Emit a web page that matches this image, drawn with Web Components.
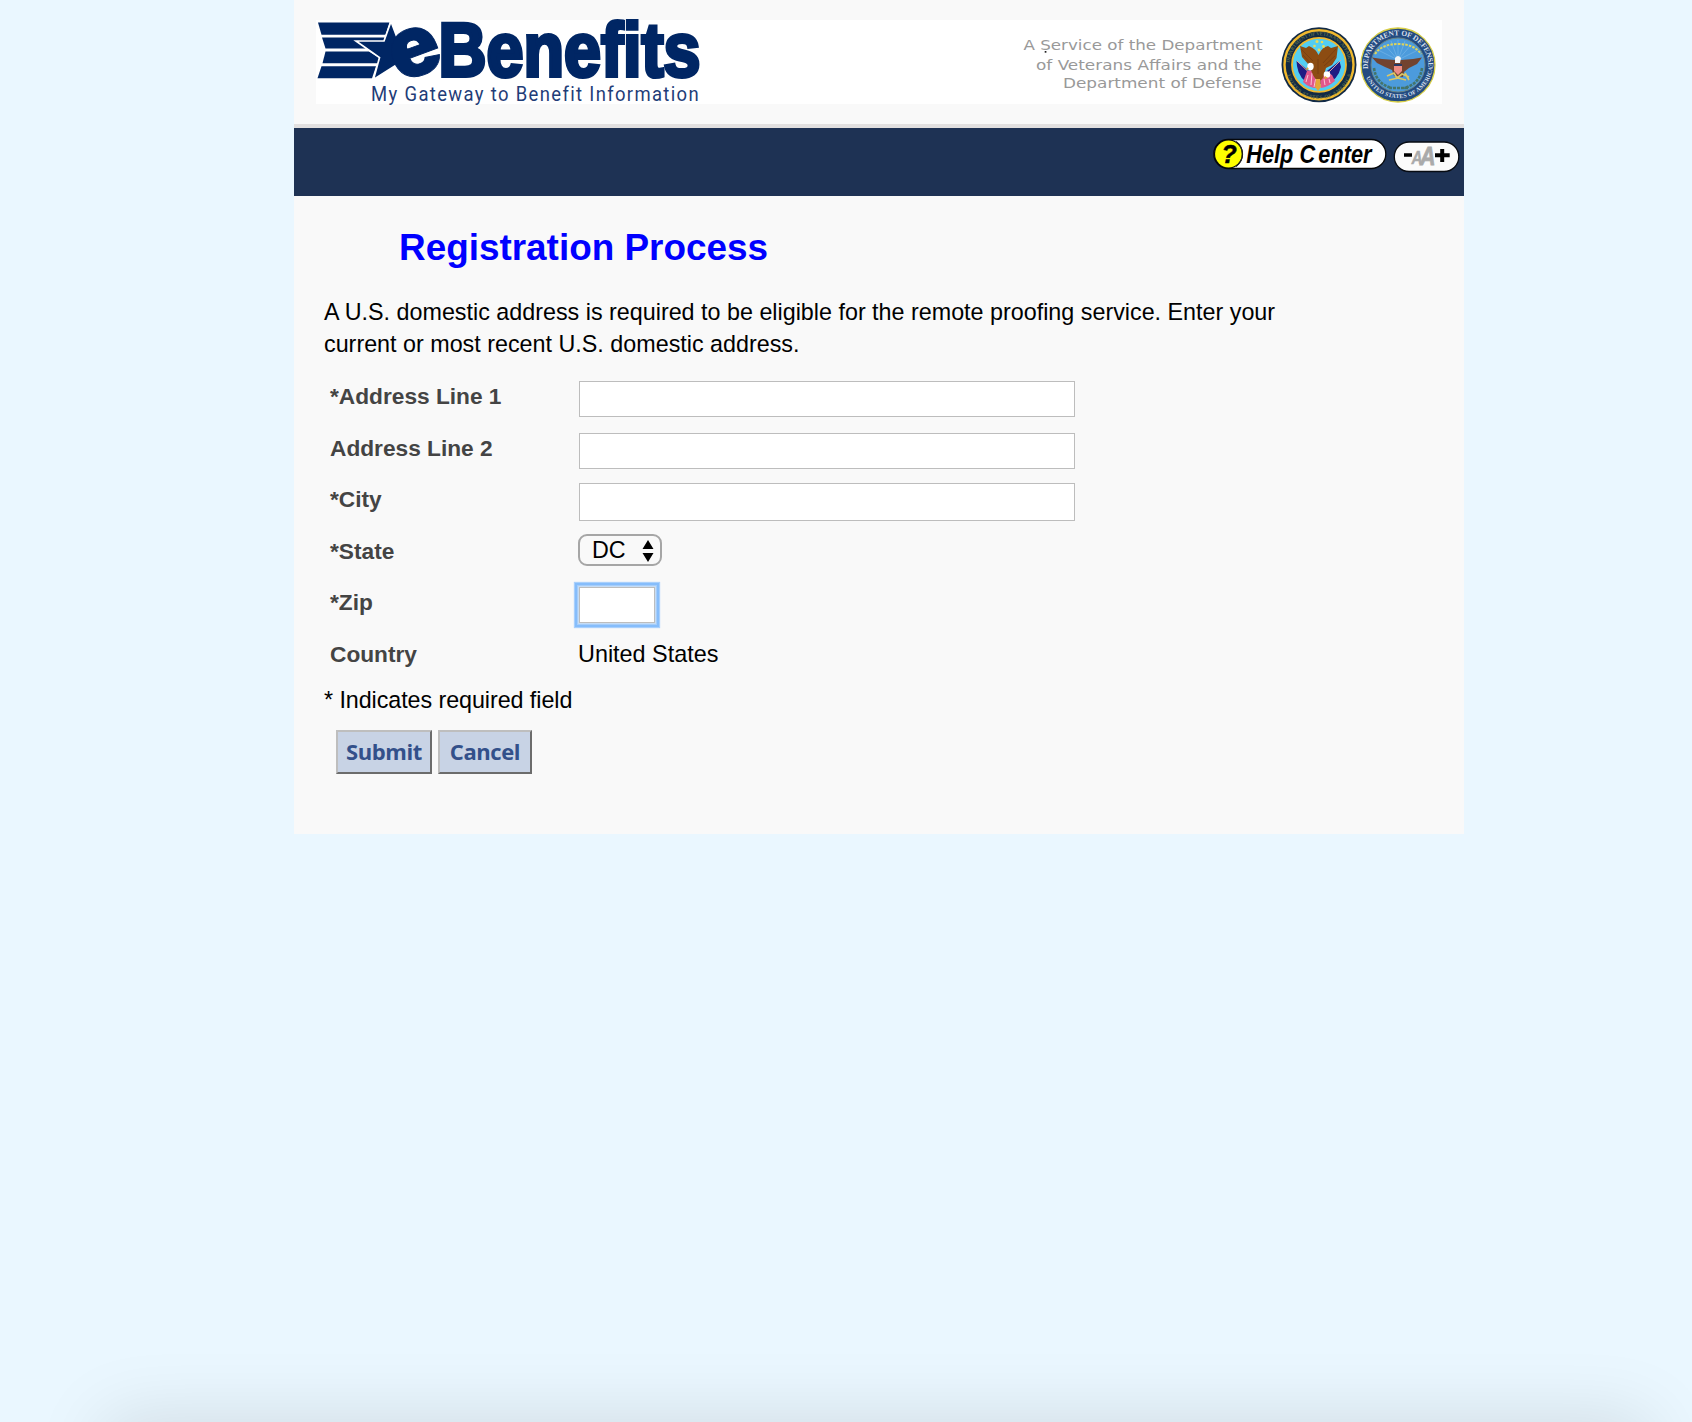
<!DOCTYPE html>
<html lang="en">
<head>
<meta charset="utf-8">
<title>eBenefits - Registration Process</title>
<style>
html,body{margin:0;height:100%}
body{background:#eaf7ff;font-family:"Liberation Sans",Arial,sans-serif;overflow:hidden}
</style>
</head>
<body>
<eb-page>
  <eb-banner slot="header"></eb-banner>
  <eb-nav slot="nav"><eb-help></eb-help><eb-textsize></eb-textsize></eb-nav>
  <eb-form>
    <span slot="title">Registration Process</span>
    <span slot="intro">A U.S. domestic address is required to be eligible for the remote proofing service. Enter your<br>current or most recent U.S. domestic address.</span>
    <eb-row label="*Address Line 1"><eb-input w="496" h="36"></eb-input></eb-row>
    <eb-row label="Address Line 2" style="--top:9.400px"><eb-input w="496" h="36"></eb-input></eb-row>
    <eb-row label="*City" style="--top:7.800px"><eb-input w="496" h="38"></eb-input></eb-row>
    <eb-row label="*State" style="--top:7.200px;--left:0px"><eb-select>DC</eb-select></eb-row>
    <eb-row label="*Zip" style="--top:8.600px"><eb-input w="76" h="36" focused></eb-input></eb-row>
    <eb-row label="Country" style="--top:9px;--left:0px"><eb-value>United States</eb-value></eb-row>
    <span slot="note">* Indicates required field</span>
    <eb-button slot="actions" style="--w:96px">Submit</eb-button>
    <eb-button slot="actions" style="--w:94px">Cancel</eb-button>
  </eb-form>
</eb-page>
<script>
function define(name, html, init) {
  customElements.define(name, class extends HTMLElement {
    constructor() {
      super();
      this.attachShadow({mode: 'open'}).innerHTML = html;
    }
    connectedCallback() { if (init) init(this, this.shadowRoot); }
  });
}

define('eb-page', `
<style>
:host{display:block;position:relative;width:100%;height:100vh;overflow:hidden}
main{box-sizing:border-box;width:1170px;height:834px;margin-left:294px;background:#f9f9f9;display:flex;flex-direction:column}
.shade{position:absolute;left:105px;right:42px;top:1518px;height:200px;box-shadow:0 -100px 72px rgba(0,0,0,.115)}
</style>
<main><slot name="header"></slot><slot name="nav"></slot><slot></slot></main>
<div class="shade"></div>`);

define('eb-banner', `
<style>
:host{display:block;padding:20px 22px;height:84px;border-bottom:4px solid #e2e0e0}
.b{display:flex;justify-content:space-between;background:#fff;height:84px}
svg{display:block;overflow:visible}
</style>
<div class="b">
<svg width="400" height="84" viewBox="316 20 400 84">
  <g fill="#002664">
    <path d="M318 22.500H389.500L385.500 34.700H321.500Z"/>
    <path d="M322 37.500H384.800L384 41H356L366 48.500H325.500Z"/>
    <path d="M325.500 51.500H369L379.500 58L378.300 63.300H322.500Z"/>
    <path d="M321.500 66.300H376L372 78.300H317.500Z"/>
  </g>
  <path d="M391 21.500L396.500 36L410 50L398 64L373.500 79.500L379.500 57.500L356 41H384Z" fill="#002664" stroke="#fff" stroke-width="1.700"/>
  <g fill="#002664" stroke="#002664">
    <text x="0" y="0" font-family="Inter,sans-serif" font-weight="900" font-size="89" stroke-width="1" transform="translate(399 83) rotate(-20) scale(.94 .97)">e</text>
    <text x="438.500" y="76.300" font-family="'Liberation Sans',Arial,sans-serif" font-weight="700" font-size="76.500" stroke-width="4" textLength="262" lengthAdjust="spacingAndGlyphs">Benefits</text>
  </g>
  <text x="371" y="101" font-family="Roboto,sans-serif" font-size="20.500" letter-spacing="1.500" fill="#1f3d78" textLength="329" lengthAdjust="spacingAndGlyphs">My Gateway to Benefit Information</text>
</svg>
<svg width="430" height="84" viewBox="1012 20 430 84">
  <defs>
    <path id="t1" d="M1289.500 64.700A29.500 29.500 0 0 1 1348.500 64.700"/>
    <path id="b1" d="M1286 66A33 33 0 0 0 1352 66"/>
    <path id="t2" d="M1368.300 71A30.200 30.200 0 1 1 1427.700 71"/>
    <path id="b2" d="M1363.500 69A35 35 0 0 0 1432.500 69"/>
  </defs>
  <g font-family="'DejaVu Sans',Verdana,sans-serif" font-size="14" fill="#999">
    <text x="1023.500" y="50" textLength="239" lengthAdjust="spacingAndGlyphs">A Service of the Department</text>
    <text x="1036" y="69.500" textLength="225.500" lengthAdjust="spacingAndGlyphs">of Veterans Affairs and the</text>
    <text x="1063" y="87.800" textLength="198.500" lengthAdjust="spacingAndGlyphs">Department of Defense</text>
  </g>
  <rect x="1044.700" y="51" width="1.700" height="1.700" fill="#222"/>
  <circle cx="1319" cy="64.800" r="37.500" fill="#122a45"/>
  <circle cx="1319" cy="64.800" r="34.500" fill="none" stroke="#f0b82e" stroke-width="2.400"/>
  <circle cx="1319" cy="64.800" r="27" fill="#53cdf2" stroke="#f0b82e" stroke-width="1.800"/>
  <g font-family="'Liberation Serif',serif" font-size="5" font-weight="700" fill="#5c6c4c">
    <text textLength="88"><textPath href="#t1" startOffset="2">DEPARTMENT OF VETERANS AFFAIRS</textPath></text>
    <text textLength="86"><textPath href="#b1" startOffset="9">UNITED STATES OF AMERICA</textPath></text>
  </g>
  <path d="M1296.500 61L1318 78L1339.500 61L1341 67Q1338 80 1326 84H1311Q1299 80 1297 66Z" fill="#201b83"/>
  <path d="M1297 61L1318 81M1341 60L1320 81" stroke="#d8a59b" stroke-width="1"/>
  <path d="M1307 71Q1315 68 1317 78L1317 88Q1309 88 1303 82ZM1320 79Q1325 70 1332 75L1335 81Q1328 87 1321 88Z" fill="#e2588c"/>
  <path d="M1308 75L1306 82M1312 73L1311 85M1316 77L1314 87M1324 79L1325 85M1329 79L1330 83" stroke="#fbc3d7" stroke-width="1"/>
  <path d="M1300 46L1306 48L1309 46Q1316 49 1318.500 55Q1322 47 1328 46L1331 48L1338 46L1336.500 58L1332 65L1326 68L1323 78L1318 83L1313 75L1309 65L1302 57Z" fill="#8c4c12"/>
  <path d="M1301 49L1313 61M1303 55L1313 66M1336 49L1323 63M1335 56L1324 66M1318 59V74" stroke="#693511" stroke-width="1" opacity=".5"/>
  <ellipse cx="1310.500" cy="66.500" rx="3.200" ry="3.700" fill="#fff"/><circle cx="1327" cy="74.500" r="3.300" fill="#fff"/>
  <path d="M1307 67L1306 70L1309 69ZM1325 76L1324 79L1328 78ZM1316 79H1320L1321 87L1318 91L1315 87Z" fill="#e4a838"/>
  <g fill="#e8dc58"><circle cx="1317" cy="41.500" r="1.500"/><circle cx="1322" cy="42" r="1.300"/><circle cx="1314.500" cy="46" r="1.300"/><circle cx="1323.500" cy="46.500" r="1.400"/><circle cx="1319" cy="50" r="1.400"/></g>

  <circle cx="1398" cy="65" r="37" fill="#234b80" stroke="#d8ce46" stroke-width="1.300"/>
  <circle cx="1398" cy="65" r="27" fill="#4c9bdc" stroke="#6b8585" stroke-width="1"/>
  <g font-family="'Liberation Serif',serif" font-size="7.500" font-weight="700" fill="#d5dfeb">
    <text textLength="100"><textPath href="#t2" startOffset="2">DEPARTMENT OF DEFENSE</textPath></text>
    <text font-size="6" textLength="91"><textPath href="#b2" startOffset="9">UNITED STATES OF AMERICA</textPath></text>
  </g>
  <path d="M1398 60L1380 51M1398 60L1385 45M1398 60L1391 41M1398 60V40M1398 60L1405 41M1398 60L1411 45M1398 60L1416 51" stroke="#74b5e6" stroke-width=".7"/>
  <path d="M1375 54Q1382 44 1398 44T1421 54" fill="none" stroke="#dfd45a" stroke-width="2" stroke-dasharray="2.500 1.200"/>
  <path d="M1374 68Q1376 84 1392 88M1422 68Q1420 84 1404 88M1389 88H1408" fill="none" stroke="#44756b" stroke-width="2.600" stroke-dasharray="3 1"/>
  <path d="M1372 57.500L1382 59L1395 60L1401 60L1413 59L1422 57.500L1417 64L1409 68L1404 72L1403 77L1394 76L1392 70L1385 67L1377 63Z" fill="#72432f"/>
  <path d="M1394 64H1402V71L1398 75L1394 71Z" fill="#ee8c82"/><path d="M1394 64H1402V66H1394Z" fill="#263961"/>
  <path d="M1395 63V58Q1398 54 1401 58L1400 63Z" fill="#f4f6f7"/>
  <path d="M1387 76L1394 73L1397 78L1402 74L1409 77M1389 80L1398 78L1406 80M1405 73L1409 80" fill="none" stroke="#dcc765" stroke-width="1.700"/>
</svg>
</div>`);

define('eb-nav', `
<style>
:host{display:flex;box-sizing:border-box;justify-content:flex-end;gap:6px;height:68px;background:#1e3254;padding:10px 4px 0 0;flex:none}
</style><slot></slot>`);

define('eb-help', `
<style>:host{display:block}svg{display:block;overflow:visible}</style>
<svg width="175" height="32" viewBox="1212 138 175 32">
  <rect x="1213.800" y="139.500" width="172" height="29" rx="14.500" fill="#fff" stroke="#05070a" stroke-width="1.300"/>
  <circle cx="1228.500" cy="154" r="14.600" fill="#05070a"/>
  <circle cx="1228.500" cy="154" r="13.400" fill="#ff0"/>
  <path d="M1236 141.500A15.500 15.500 0 0 1 1236 166.500" fill="none" stroke="#222" stroke-width="1.200"/>
  <g font-family="'Liberation Sans',Arial,sans-serif" font-weight="700" font-style="italic" fill="#000">
    <text x="1221.500" y="162.500" font-size="25" stroke="#000" stroke-width=".5">?</text>
    <text x="0" y="0" font-size="26.500" transform="translate(1246.300 162.700) scale(.82 1)">Help <tspan letter-spacing="4">C</tspan>enter</text>
  </g>
</svg>`);

define('eb-textsize', `
<style>:host{display:block;padding-top:3px}svg{display:block;overflow:visible}</style>
<svg width="67" height="32" viewBox="1393 141 67 32">
  <rect x="1394.300" y="142" width="64.500" height="29.500" rx="14.750" fill="#fbfbfb" stroke="#070b12" stroke-width="1.300"/>
  <path d="M1404 153.200H1412V156.800H1404ZM1435 153.300H1440.200V149H1444.200V153.300H1449.700V157.200H1444.200V162H1440.200V157.200H1435Z" fill="#000"/>
  <g font-family="'Liberation Sans',Arial,sans-serif" font-weight="700" font-style="italic" fill="#aaa" stroke="#aaa">
    <text x="1411.500" y="163.500" font-size="17.500" stroke-width=".4" textLength="11" lengthAdjust="spacingAndGlyphs">A</text>
    <text x="1420" y="164.500" font-size="26" stroke-width=".8" textLength="15.500" lengthAdjust="spacingAndGlyphs">A</text>
  </g>
</svg>`);

define('eb-form', `
<style>
:host{display:flex;flex-direction:column}
h1{margin:31px 0 0 105px;font-size:36.900px;line-height:42px;font-weight:700;color:#00f}
p{margin:0 0 0 30px;font-size:23.320px;line-height:32px;color:#000;white-space:nowrap}
.intro{margin-top:27px}
.rows{margin:12px 0 0 36px}
.note{margin-top:2px;letter-spacing:-.07px}
.act{display:flex;gap:6px;margin:14px 0 0 42px}
</style>
<h1><slot name="title"></slot></h1>
<p class="intro"><slot name="intro"></slot></p>
<div class="rows"><slot></slot></div>
<p class="note"><slot name="note"></slot></p>
<div class="act"><slot name="actions"></slot></div>`);

define('eb-row', `
<style>
:host{display:flex;height:51.600px}
.l{width:248px;flex:none;font-weight:700;font-size:22.700px;line-height:48.400px;color:#444;white-space:nowrap}
.c{padding-top:var(--top,9px);padding-left:var(--left,1px)}
</style>
<div class="l"></div><div class="c"><slot></slot></div>`,
(el, root) => { root.querySelector('.l').textContent = el.getAttribute('label'); });

define('eb-input', `
<style>
:host{display:block}
input{display:block;box-sizing:border-box;margin:0;padding:0 6px;border:1px solid #bdbdbd;background:#fff;border-radius:0;outline:none;font:23px "Liberation Sans",Arial,sans-serif}
:host([focused]) input{box-shadow:0 0 0 1px #c5dcf5,0 0 0 2px #a5cdfa,0 0 0 4px #86bdfb,0 0 1px 5px #a9d0fc}
</style><input type="text">`,
(el, root) => {
  const i = root.querySelector('input');
  i.style.width = el.getAttribute('w') + 'px';
  i.style.height = el.getAttribute('h') + 'px';
});

define('eb-select', `
<style>
:host{display:flex;box-sizing:border-box;align-items:center;justify-content:space-between;width:84px;height:32px;padding:0 6px 0 12px;border:2px solid #a6a6a6;border-radius:9px;background:#f9f9f9;font-size:23.300px;line-height:28px;color:#000}
svg{display:block;margin-top:2px}
</style><slot></slot>
<svg width="12" height="22" viewBox="0 0 12 22"><path d="M.5 9L6 0L11.500 9ZM.5 13L6 22L11.500 13Z" fill="#000"/></svg>`);

define('eb-value', `
<style>:host{display:block;font-size:23.400px;line-height:30px;color:#000;white-space:nowrap}</style><slot></slot>`);

define('eb-button', `
<style>
button{display:block;box-sizing:border-box;width:var(--w);height:44px;margin:0;padding:0 0 2px;border:2px solid;border-color:#bebebe #6c6c6c #6c6c6c #bebebe;background:#c8d3e5;color:#33508a;font:700 22px/38px "Open Sans","Noto Sans",sans-serif;letter-spacing:-.4px;border-radius:0}
:host{display:block}
</style><button type="button"><slot></slot></button>`);
</script>
</body>
</html>
